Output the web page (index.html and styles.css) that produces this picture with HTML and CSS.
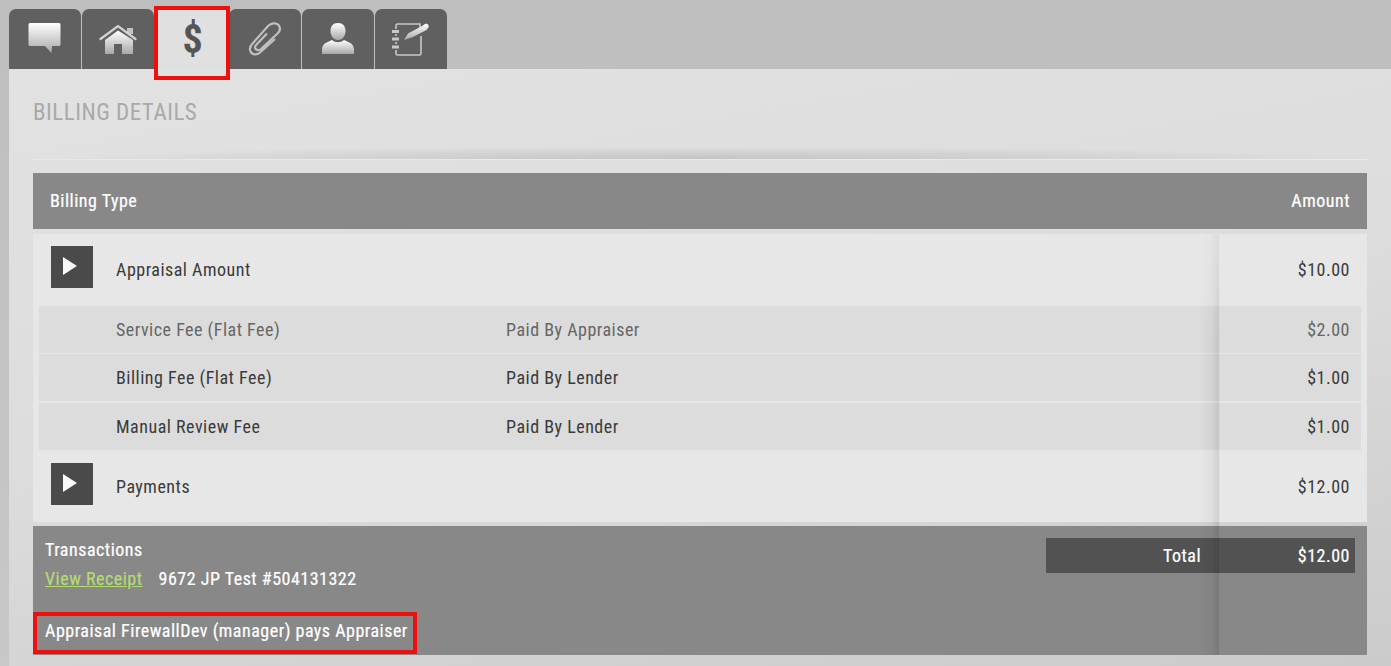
FILE: index.html
```html
<!DOCTYPE html>
<html lang="en">
<head>
    <meta charset="UTF-8">
    <meta name="viewport" content="width=device-width, initial-scale=1.0">
    <title>Billing Details</title>
    <link rel="stylesheet" href="styles.css">
</head>
<body>
    <svg class="svg-defs" width="0" height="0" aria-hidden="true">
        <defs>
            <linearGradient id="iconFill" x1="0" y1="0" x2="0" y2="1">
                <stop offset="0" stop-color="#ffffff"/>
                <stop offset="1" stop-color="#a8a8a8"/>
            </linearGradient>
        </defs>
    </svg>

    <div class="tabs">
        <div class="tab">
            <svg class="tab-icon" width="34" height="34" viewBox="0 0 34 34">
                <path d="M2 1h29a1.500 1.500 0 0 1 1.500 1.500v20a1.500 1.500 0 0 1-1.500 1.500H24l-.500 7-6.500-7H2a1.500 1.500 0 0 1-1.500-1.500v-20A1.500 1.500 0 0 1 2 1z" fill="url(#iconFill)"/>
            </svg>
        </div>
        <div class="tab">
            <svg class="tab-icon" width="38" height="32" viewBox="0 0 38 32">
                <path d="M28 5h6v6h-6z" fill="#c4c4c4"/>
                <path d="M1.500 16 19 3l17.500 13" fill="none" stroke="#d4d4d4" stroke-width="2.200" stroke-linecap="round"/>
                <path d="M19 7.500 6 17v14h9V21h8v10h11V17z" fill="url(#iconFill)"/>
            </svg>
        </div>
        <div class="tab tab-active">
            <span class="dollar">$</span>
        </div>
        <div class="tab">
            <svg class="tab-icon" width="34" height="36" viewBox="0 0 34 36">
                <path d="M27 18 12 31.500C8 35 3 33.500 2 29c-.500-3 1-5 3-7L20 5c3-3 8-3.500 10.500-1 2.500 3 1.500 6-1 8.500L13 28c-2.500 2-6 1-6-1.500 0-1.500 1-2.500 2-3.500l10-10.500" fill="none" stroke="#c0c0c0" stroke-width="2.200"/>
            </svg>
        </div>
        <div class="tab">
            <svg class="tab-icon" width="32" height="34" viewBox="0 0 32 34">
                <path d="M16 1c5 0 7.500 3.500 7.500 8 0 4.500-2.500 9-7.500 9s-7.500-4.500-7.500-9c0-4.500 2.500-8 7.500-8z" fill="url(#iconFill)"/>
                <path d="M10 18c-4 2-9.500 3-10 9v5h32v-5c-.500-6-6-7-10-9-3.500 3-8.500 3-12 0z" fill="url(#iconFill)"/>
            </svg>
        </div>
        <div class="tab">
            <svg class="tab-icon" width="40" height="36" viewBox="0 0 40 36">
                <path d="M5 8V4.500A1.500 1.500 0 0 1 6.500 3H29v5M30 15v17.500a1.500 1.500 0 0 1-1.500 1.500H6.500A1.500 1.500 0 0 1 5 32.500V29M5 23v-2M5 15v-2" fill="none" stroke="#c8c8c8" stroke-width="1.600"/>
                <path d="M1 10.500h7M1 18h7M1 26h7" stroke="#c8c8c8" stroke-width="2.800" fill="none"/>
                <path d="M13 19l4-6.500L31 5l3-2c2-1 4.500 1 3.500 3.500l-2 2.500L22 16z" fill="url(#iconFill)"/>
            </svg>
        </div>
    </div>

    <div class="panel">
        <h2 class="panel-title">BILLING DETAILS</h2>
        <div class="title-rule"></div>

        <div class="billing">
            <div class="billing-head">
                <span>Billing Type</span>
                <span>Amount</span>
            </div>

            <div class="billing-body">
                <div class="billing-row billing-row-first">
                    <span class="expand"></span>
                    <span class="row-label">Appraisal Amount</span>
                    <span class="row-amount">$10.00</span>
                </div>
                <div class="fees">
                    <div class="fee-row fee-muted">
                        <span class="fee-name">Service Fee (Flat Fee)</span>
                        <span class="fee-payer">Paid By Appraiser</span>
                        <span class="row-amount">$2.00</span>
                    </div>
                    <div class="fee-row fee-row-wide">
                        <span class="fee-name">Billing Fee (Flat Fee)</span>
                        <span class="fee-payer">Paid By Lender</span>
                        <span class="row-amount">$1.00</span>
                    </div>
                    <div class="fee-row fee-row-last">
                        <span class="fee-name">Manual Review Fee</span>
                        <span class="fee-payer">Paid By Lender</span>
                        <span class="row-amount">$1.00</span>
                    </div>
                </div>
                <div class="billing-row">
                    <span class="expand"></span>
                    <span class="row-label">Payments</span>
                    <span class="row-amount">$12.00</span>
                </div>
            </div>

            <div class="billing-foot">
                <div class="foot-top">
                    <div class="transactions">
                        <div>Transactions</div>
                        <div class="receipt"><a href="#">View Receipt</a><span>9672 JP Test #504131322</span></div>
                    </div>
                    <div class="total">
                        <span class="total-label">Total</span>
                        <span class="total-amount">$12.00</span>
                    </div>
                </div>
                <div class="foot-note">Appraisal FirewallDev (manager) pays Appraiser</div>
            </div>

            <div class="column-shadow"></div>
        </div>
    </div>

    <div class="mark mark-tab"></div>
    <div class="mark mark-note"></div>
</body>
</html>
```

FILE: styles.css
```css
* {
    margin: 0;
    padding: 0;
    box-sizing: border-box;
}

html, body {
    height: 100%;
    overflow: hidden;
}

body {
    position: relative;
    padding: 9px 0 0 9px;
    background: linear-gradient(180deg, #bebebe 0%, #c8c8c8 100%);
    font-family: "Roboto", "Liberation Sans", sans-serif;
    font-stretch: condensed;
    font-size: 18px;
    letter-spacing: .5px;
    color: #3a3a3a;
}

.svg-defs {
    position: absolute;
}

/* tabs */
.tabs {
    display: flex;
    gap: 1px;
    height: 60px;
}

.tab {
    width: 72px;
    display: flex;
    align-items: center;
    justify-content: center;
    background: #606060;
    border-radius: 7px 7px 0 0;
}

.tab-active {
    position: relative;
    z-index: 1;
    width: 75px;
    margin-right: -2px;
    background: #e0e0e0;
    border-radius: 0;
}

.dollar {
    font-size: 40px;
    font-weight: 700;
    letter-spacing: 0;
    color: #555;
}

/* panel */
.panel {
    height: 597px;
    padding: 0 24px;
    background: linear-gradient(170deg, #e2e2e2 0%, #dcdcdc 50%, #cbcbcb 100%);
}

.panel-title {
    padding-top: 30px;
    height: 77px;
    font-size: 23px;
    font-weight: 400;
    color: #a9a9a9;
}

.title-rule {
    height: 14px;
    border-bottom: 1px solid #e9e9e9;
    background: radial-gradient(ellipse 50% 100% at 50% 100%, #c4c4c4, rgba(196, 196, 196, 0) 98%);
}

.billing {
    position: relative;
    margin-top: 13px;
}

.billing-head {
    display: flex;
    justify-content: space-between;
    align-items: center;
    height: 56px;
    padding: 0 17px;
    background: #888;
    color: #fff;
    -webkit-text-stroke: .2px;
}

.billing-head span {
    margin-top: -2px;
}

.billing-body {
    margin-top: 5px;
    height: 288px;
    background: #e7e7e7;
}

.billing-row {
    display: flex;
    align-items: center;
    height: 72px;
    padding: 0 18px;
}

.billing-row-first {
    padding-bottom: 2px;
}

.expand {
    position: relative;
    width: 42px;
    height: 42px;
    margin-right: 23px;
    margin-bottom: 4px;
    background: #4a4a4a;
}

.expand::after {
    content: "";
    position: absolute;
    left: 12px;
    top: 11px;
    border-left: 14px solid #f8f8f8;
    border-top: 9.500px solid transparent;
    border-bottom: 9.500px solid transparent;
}

.row-label {
    flex: 1;
}

.row-amount {
    margin-left: auto;
    margin-right: -1px;
}

.fees {
    margin: 0 6px;
    background: #dcdcdc;
}

.fee-row {
    display: flex;
    align-items: center;
    height: 48px;
    padding: 0 12px 0 77px;
    border-bottom: 1px solid #e7e7e7;
}

.fee-row-wide {
    height: 49px;
    border-bottom-width: 2px;
}

.fee-row-last {
    height: 47px;
    border-bottom: 0;
}

.fee-muted {
    color: #666;
}

.fee-name {
    width: 390px;
}

/* footer of the table */
.billing-foot {
    margin-top: 4px;
    height: 129px;
    padding: 12px 12px 0;
    background: #888;
    color: #fff;
    -webkit-text-stroke: .2px;
}

.foot-top {
    display: flex;
    justify-content: space-between;
    height: 74px;
}

.transactions {
    line-height: 29px;
    margin-top: -3px;
}

.receipt a {
    margin-right: 16px;
    color: #b4dc70;
}

.total {
    display: flex;
    align-items: center;
    width: 309px;
    height: 35px;
    padding: 0 5px 0 117px;
    background: #525252;
}

.total-amount {
    margin-left: auto;
}

.foot-note {
    margin-top: 4px;
    line-height: 29px;
}

.column-shadow {
    position: absolute;
    left: 1166px;
    top: 61px;
    bottom: 0;
    width: 24px;
    background: linear-gradient(90deg, rgba(0, 0, 0, 0), rgba(0, 0, 0, .03) 50%, rgba(0, 0, 0, .1) 82%, rgba(0, 0, 0, 0) 86%);
    -webkit-mask-image: linear-gradient(180deg, rgba(0, 0, 0, .4), #000 25%);
    pointer-events: none;
}

/* red annotation boxes */
.mark {
    position: absolute;
    z-index: 2;
    border: 4px solid #f00f0f;
}

.mark-tab {
    left: 154px;
    top: 6px;
    width: 76px;
    height: 74px;
}

.mark-note {
    left: 33px;
    top: 612px;
    width: 384px;
    height: 42px;
}
```
